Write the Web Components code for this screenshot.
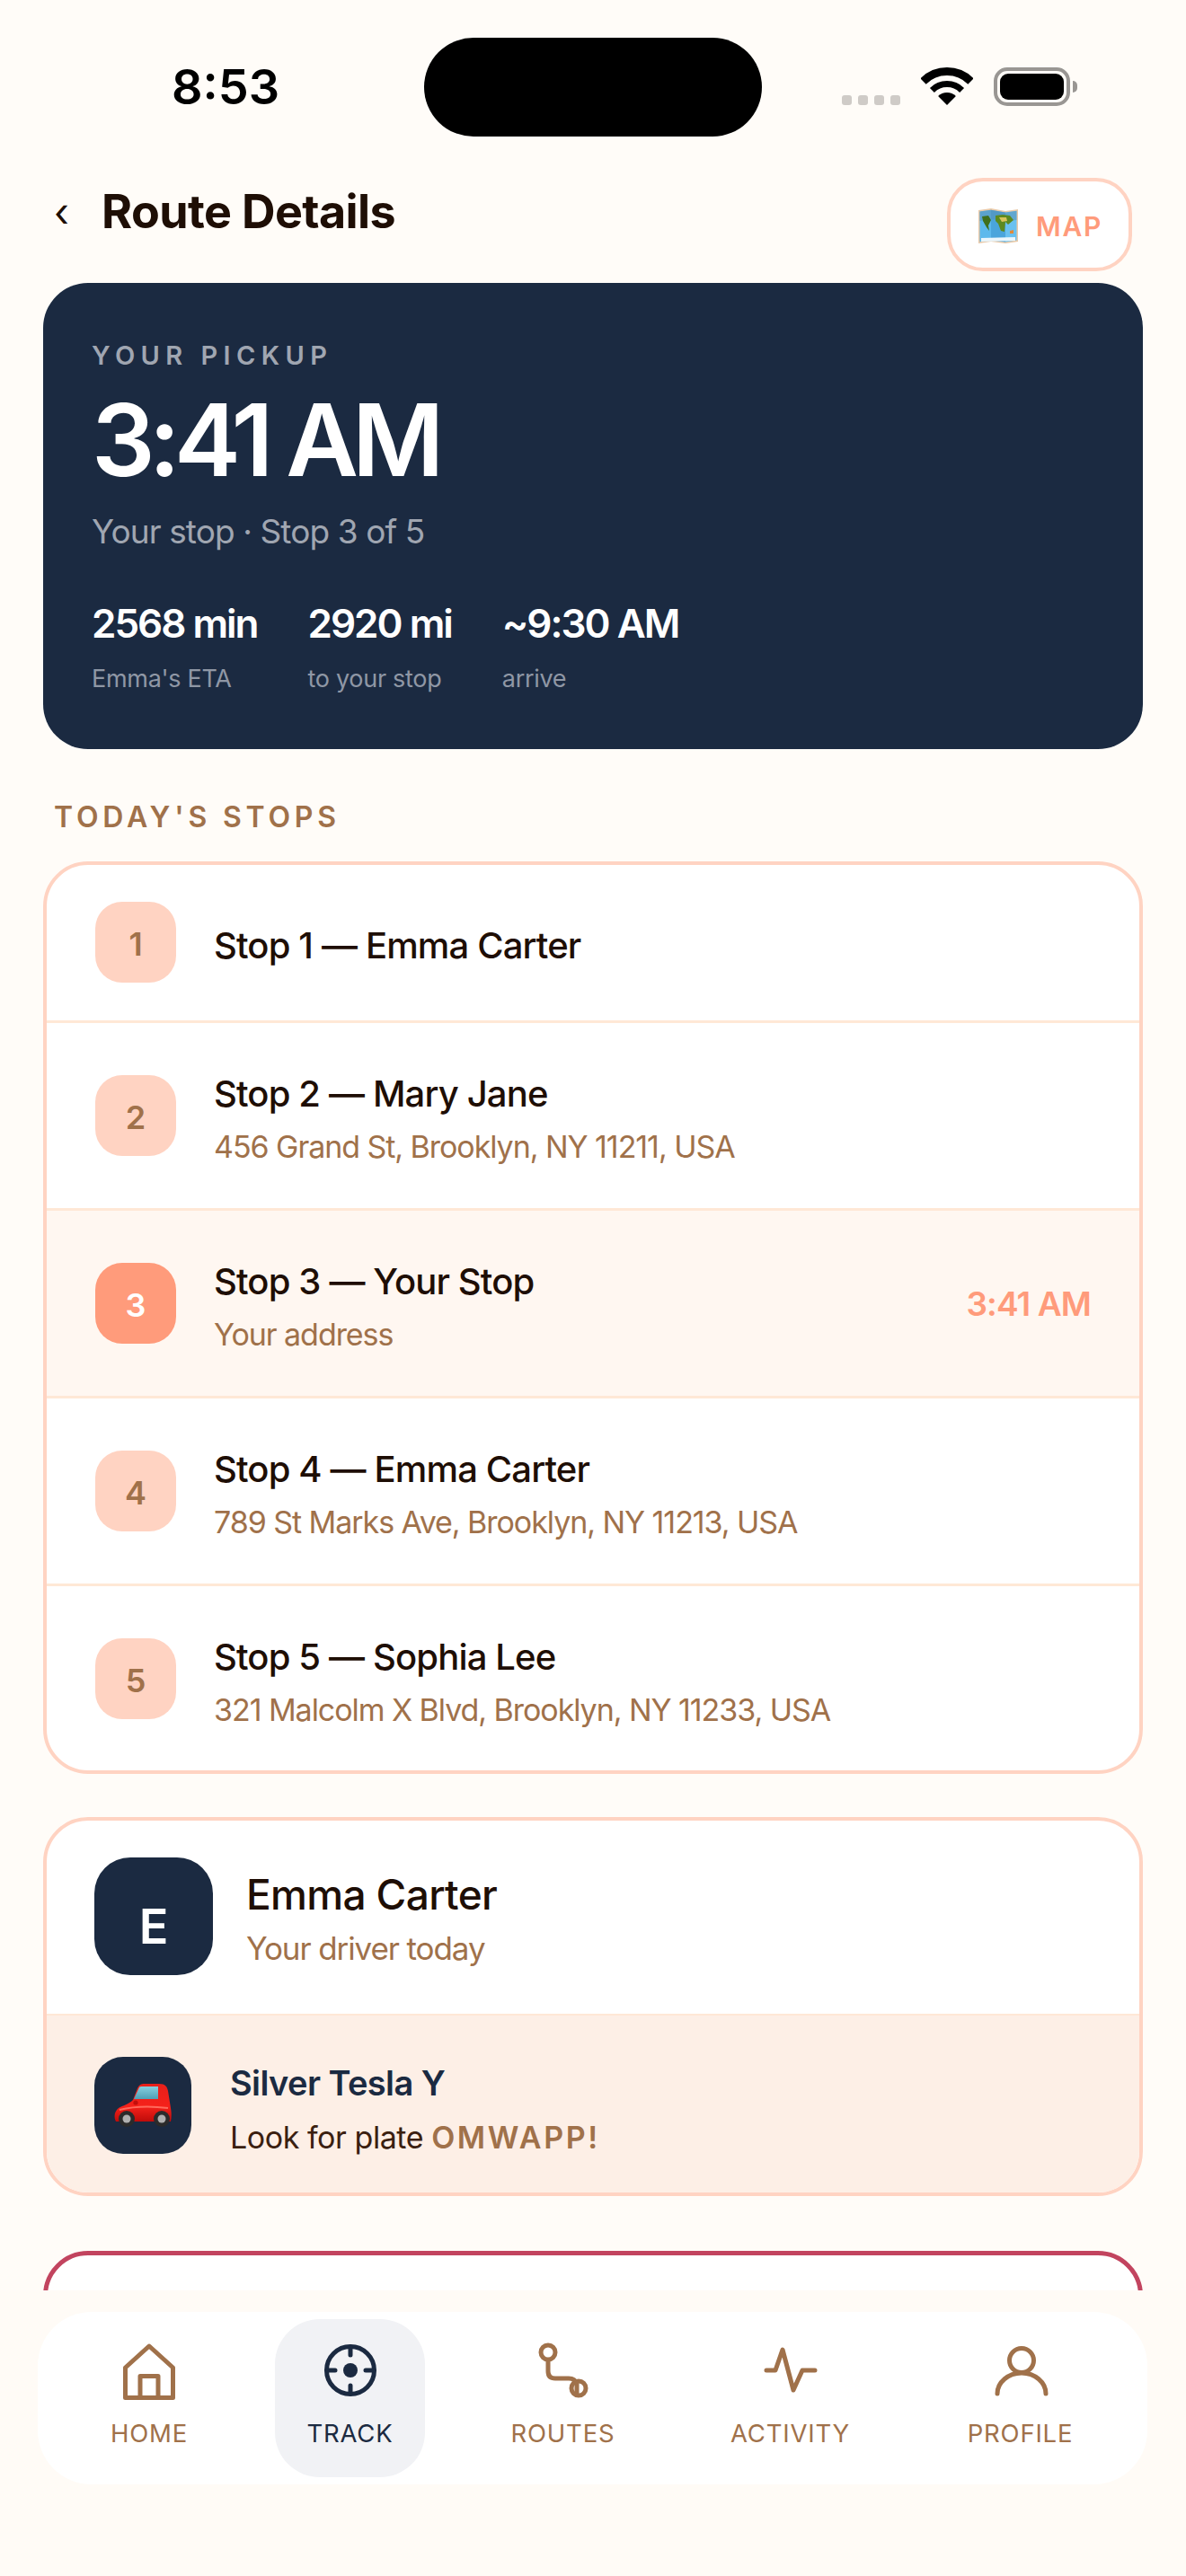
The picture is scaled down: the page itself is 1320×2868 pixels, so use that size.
<!DOCTYPE html>
<html lang="en">
<head>
<meta charset="utf-8">
<title>Route Details</title>
<style>
  html,body{margin:0;padding:0;background:#FFFCF8;}
  body{font-family:"Inter","Liberation Sans",sans-serif;color:#1E0E05;}
</style>
</head>
<body>
<app-screen>
  <status-bar slot="top" time="8:53"></status-bar>
  <route-header slot="top" title="Route Details"></route-header>
  <pickup-hero time="3:41 AM" stop="Your stop · Stop 3 of 5"></pickup-hero>
  <section-title>TODAY'S STOPS</section-title>
  <stop-list>
    <stop-row num="1" name="Stop 1 — Emma Carter"></stop-row>
    <stop-row num="2" name="Stop 2 — Mary Jane" addr="456 Grand St, Brooklyn, NY 11211, USA"></stop-row>
    <stop-row num="3" name="Stop 3 — Your Stop" addr="Your address" time="3:41 AM" current></stop-row>
    <stop-row num="4" name="Stop 4 — Emma Carter" addr="789 St Marks Ave, Brooklyn, NY 11213, USA"></stop-row>
    <stop-row num="5" name="Stop 5 — Sophia Lee" addr="321 Malcolm X Blvd, Brooklyn, NY 11233, USA"></stop-row>
  </stop-list>
  <driver-card name="Emma Carter" car="Silver Tesla Y" plate="OMWAPP!"></driver-card>
  <alert-card></alert-card>
  <bottom-nav slot="bottom">
    <nav-item icon="home" label="HOME"></nav-item>
    <nav-item icon="track" label="TRACK" active></nav-item>
    <nav-item icon="routes" label="ROUTES"></nav-item>
    <nav-item icon="activity" label="ACTIVITY"></nav-item>
    <nav-item icon="profile" label="PROFILE"></nav-item>
  </bottom-nav>
</app-screen>

<script>
const FONT = '"Inter","Liberation Sans",sans-serif'

class AppScreen extends HTMLElement{
    constructor(){
        super()
        this.attachShadow({mode:'open'})
    }
    connectedCallback(){
        this.shadowRoot.innerHTML = `
        <style>
            :host{display:flex;flex-direction:column;width:1320px;height:2868px;overflow:hidden;background:#FFFCF8;}
            .scroll{height:2235px;overflow:hidden;padding:0 48px;box-sizing:border-box;flex:none;}
            .bottom{flex:1;padding-top:24px;background:#FFFBF6;}
        </style>
        <slot name="top"></slot>
        <div class="scroll"><slot></slot></div>
        <div class="bottom"><slot name="bottom"></slot></div>
        `
    }
}

class StatusBar extends HTMLElement{
    constructor(){
        super()
        this.attachShadow({mode:'open'})
    }
    connectedCallback(){
        this.shadowRoot.innerHTML = `
        <style>
            :host{display:grid;grid-template-columns:472px 376px 472px;padding-top:42px;height:110px;font-family:${FONT};}
            .time{font-size:54px;font-weight:600;line-height:110px;color:#000;padding-left:191px;}
            .island{background:#000;border-radius:55px;height:110px;}
            .right{display:flex;align-items:flex-start;padding:33px 0 0 89px;}
            .dots{display:flex;gap:7px;margin-top:31px;}
            .dots i{display:block;width:11px;height:11px;border-radius:3px;background:#CFCBC7;}
            .wifi{margin-left:23px;display:block;}
            .batt{margin-left:23px;width:85px;height:43px;border:4px solid #999693;border-radius:15px;box-sizing:border-box;padding:3px;}
            .batt div{background:#000;height:100%;border-radius:9px;}
            .nub{width:5px;height:13px;background:#999693;border-radius:0 5px 5px 0;margin:15px 0 0 3px;}
        </style>
        <div class="time">${this.getAttribute('time')}</div>
        <div class="island"></div>
        <div class="right">
            <div class="dots"><i></i><i></i><i></i><i></i></div>
            <svg class="wifi" width="58" height="43" viewBox="0 0 58 43" fill="none" stroke="#000">
                <path d="M2.5 15.5A37.5 37.5 0 0 1 55.5 15.5" stroke-width="9"/>
                <path d="M12.4 25.4A23.5 23.5 0 0 1 45.6 25.4" stroke-width="7"/>
                <path d="M29 42L19.1 32.1A14 14 0 0 1 38.9 32.1Z" fill="#000" stroke="none"/>
            </svg>
            <div class="batt"><div></div></div>
            <div class="nub"></div>
        </div>
        `
    }
}

class RouteHeader extends HTMLElement{
    constructor(){
        super()
        this.attachShadow({mode:'open'})
    }
    connectedCallback(){
        this.shadowRoot.innerHTML = `
        <style>
            :host{display:flex;align-items:flex-start;padding:46px 60px 13px 60px;font-family:${FONT};}
            .back{font-size:44px;line-height:60px;width:53px;margin-top:8px;color:#1E0E05;}
            h1{margin:8px 0 0;font-size:52px;font-weight:700;line-height:60px;letter-spacing:-.6px;color:#1E0E05;flex:1;}
            .map{display:flex;align-items:center;box-sizing:border-box;width:206px;height:104px;background:#fff;border:4px solid #FFD3C2;border-radius:40px;padding:4px 0 0 30px;gap:19px;}
            .map span{font-size:30px;font-weight:600;letter-spacing:1.8px;color:#FF9B7B;}
        </style>
        <div class="back">‹</div>
        <h1>${this.getAttribute('title')}</h1>
        <div class="map">
            <svg width="46" height="40" viewBox="0 0 46 40">
                <path d="M1 2L15 0L31 3L45 1V37L31 39L15 37L1 39Z" fill="#E9C9A8"/>
                <path d="M2.5 3.5L15 1.8V35.5L2.5 37.2Z" fill="#5DB9EC"/>
                <path d="M15 1.8L31 4.6V37.5L15 35.5Z" fill="#4AA5DC"/>
                <path d="M31 4.6L43.5 2.8V35.4L31 37.5Z" fill="#69C1F0"/>
                <path d="M2.5 3.5L15 1.8L31 4.6L43.5 2.8V13L31 14L15 12L2.5 14Z" fill="#5A8FB5" opacity=".55"/>
                <path d="M5 9L12 8L15 13L12 19L13 25L10 21L6 14Z" fill="#3F6F1C"/>
                <path d="M20 8L28 7L36 8L40 13L34 18L31 15L30 26L26 25L23 17L20 14Z" fill="#5C8A20"/>
                <path d="M24 10L32 10L33 14L27 15Z" fill="#D9C45A"/>
                <path d="M36 25L40 24L40 28L36 28Z" fill="#E08A3A"/>
                <path d="M4 33L42 32V36L4 37Z" fill="#EAF6FC"/>
            </svg>
            <span>MAP</span>
        </div>
        `
    }
}

class PickupHero extends HTMLElement{
    constructor(){
        super()
        this.attachShadow({mode:'open'})
    }
    connectedCallback(){
        this.shadowRoot.innerHTML = `
        <style>
            :host{display:block;background:#1B2A41;border-radius:50px;padding:63px 54px 60px;font-family:${FONT};color:#fff;}
            .lbl{font-size:29px;font-weight:600;line-height:36px;letter-spacing:6.4px;color:#A0A6B1;}
            .big{font-size:111px;font-weight:600;line-height:120px;margin-top:16px;letter-spacing:-7px;}
            .sub{font-size:37px;line-height:50px;margin-top:17px;color:#A0A6B1;letter-spacing:-.9px;}
            .stats{display:flex;gap:56px;margin-top:52px;}
            .val{font-size:44px;font-weight:600;line-height:50px;letter-spacing:-2px;}
            .cap{font-size:27px;line-height:36px;margin-top:19px;color:#8F97A5;letter-spacing:-.3px;}
        </style>
        <div class="lbl">YOUR PICKUP</div>
        <div class="big">${this.getAttribute('time')}</div>
        <div class="sub">${this.getAttribute('stop')}</div>
        <div class="stats">
            <div><div class="val">2568 min</div><div class="cap">Emma's ETA</div></div>
            <div><div class="val">2920 mi</div><div class="cap">to your stop</div></div>
            <div><div class="val">~9:30 AM</div><div class="cap">arrive</div></div>
        </div>
        `
    }
}

class SectionTitle extends HTMLElement{
    constructor(){
        super()
        this.attachShadow({mode:'open'})
    }
    connectedCallback(){
        this.shadowRoot.innerHTML = `
        <style>
            :host{display:block;margin:56px 0 29px 12px;font-family:${FONT};font-size:32px;font-weight:600;line-height:40px;letter-spacing:4.8px;color:#A0714A;}
        </style>
        <slot></slot>
        `
    }
}

class StopList extends HTMLElement{
    constructor(){
        super()
        this.attachShadow({mode:'open'})
    }
    connectedCallback(){
        this.shadowRoot.innerHTML = `
        <style>
            :host{display:block;background:#fff;border:4px solid #FFD3C2;border-radius:50px;overflow:hidden;}
        </style>
        <slot></slot>
        `
    }
}

class StopRow extends HTMLElement{
    constructor(){
        super()
        this.attachShadow({mode:'open'})
    }
    connectedCallback(){
        this.render()
    }
    styles(){
        return `
        :host{display:flex;align-items:center;gap:42px;padding:41px 54px;font-family:${FONT};border-top:3px solid #FFE8D6;}
        :host(:first-child){border-top:0;padding-bottom:42px;}
        :host(:last-child){padding-bottom:40px;}
        :host([current]){background:#FFF7F1;}
        .num{flex:none;width:90px;height:90px;border-radius:30px;background:#FFD3C2;color:#A0714A;display:flex;align-items:center;justify-content:center;font-size:36px;font-weight:600;padding-top:4px;box-sizing:border-box;}
        :host([current]) .num{background:#FF9B7B;color:#fff;}
        .txt{flex:1;display:flex;flex-direction:column;gap:10px;padding:12px 0 4px;}
        .name{font-size:40px;font-weight:500;line-height:52px;letter-spacing:-.85px;color:#1E0E05;}
        .addr{font-size:34px;line-height:46px;letter-spacing:-1.05px;color:#A0714A;}
        .time{font-size:37px;font-weight:600;letter-spacing:-.9px;color:#FF9B7B;}
        `
    }
    template(){
        let addr = this.getAttribute('addr')
        let time = this.getAttribute('time')
        return `
        <div class="num">${this.getAttribute('num')}</div>
        <div class="txt">
            <div class="name">${this.getAttribute('name')}</div>
            ${addr ? `<div class="addr">${addr}</div>` : ''}
        </div>
        ${time ? `<div class="time">${time}</div>` : ''}
        `
    }
    render(){
        this.shadowRoot || this.attachShadow({mode:'open'})
        this.shadowRoot.innerHTML = `<style>${this.styles()}</style>${this.template()}`
    }
}

class DriverCard extends HTMLElement{
    constructor(){
        super()
        this.attachShadow({mode:'open'})
    }
    connectedCallback(){
        this.shadowRoot.innerHTML = `
        <style>
            :host{display:block;margin-top:48px;background:#fff;border:4px solid #FFD3C2;border-radius:50px;overflow:hidden;font-family:${FONT};}
            .top{display:flex;gap:37px;padding:41px 53px 43px;height:131px;}
            .avatar{flex:none;width:132px;height:131px;border-radius:40px;background:#1B2A41;color:#fff;font-size:54px;font-weight:600;display:flex;justify-content:center;padding-top:47px;box-sizing:border-box;line-height:60px;}
            .name{font-size:46px;font-weight:500;line-height:56px;letter-spacing:-.65px;margin-top:13px;color:#1E0E05;}
            .sub{font-size:35px;line-height:46px;margin-top:9px;letter-spacing:-1.1px;color:#A0714A;}
            .car{display:flex;gap:43px;align-items:center;background:#FDEFE6;border-top:2px solid #FFE8D6;padding:46px 53px 43px;}
            .icon{flex:none;width:108px;height:108px;border-radius:32px;background:#1B2A41;display:flex;align-items:center;justify-content:center;}
            .model{font-size:38px;font-weight:600;line-height:48px;letter-spacing:-.6px;margin-top:4px;color:#1B2A41;}
            .plate{font-size:34px;line-height:46px;margin-top:14px;margin-bottom:-6px;letter-spacing:-.45px;color:#3A2010;}
            .plate b{font-weight:600;letter-spacing:2.6px;color:#A0714A;}
        </style>
        <div class="top">
            <div class="avatar">E</div>
            <div>
                <div class="name">${this.getAttribute('name')}</div>
                <div class="sub">Your driver today</div>
            </div>
        </div>
        <div class="car">
            <div class="icon">
                <svg width="64" height="50" viewBox="0 0 64 50">
                    <defs>
                        <linearGradient id="glass" x1="0" y1="0" x2="0" y2="1"><stop offset="0" stop-color="#86CFDF"/><stop offset="1" stop-color="#4F9FB5"/></linearGradient>
                        <linearGradient id="paint" x1="0" y1="0" x2="0" y2="1"><stop offset="0" stop-color="#E8201A"/><stop offset=".6" stop-color="#F5211A"/><stop offset="1" stop-color="#BE0C0A"/></linearGradient>
                    </defs>
                    <path d="M2 43C-1 37 1 31 5 28C10 25 16 24 21 19L26 6C28 2 30 1 34 1H50C57 1 59 4 60 9L63 28C64 34 64 38 63 43Z" fill="url(#paint)"/>
                    <path d="M28 5C28 4 30 4 32 4H49V18H22Z" fill="url(#glass)"/>
                    <circle cx="24" cy="22" r="2.6" fill="#C30F0C"/>
                    <path d="M6 30C22 26 44 26 60 28" stroke="#FF6A5C" stroke-width="2" fill="none"/>
                    <circle cx="14" cy="40" r="9" fill="#2B2B2B"/><circle cx="14" cy="40" r="4.5" fill="#B0B0B0"/>
                    <circle cx="53" cy="40" r="9" fill="#2B2B2B"/><circle cx="53" cy="40" r="4.5" fill="#B0B0B0"/>
                </svg>
            </div>
            <div>
                <div class="model">${this.getAttribute('car')}</div>
                <div class="plate">Look for plate <b>${this.getAttribute('plate')}</b></div>
            </div>
        </div>
        `
    }
}

// only the top edge of this one is visible above the nav
class AlertCard extends HTMLElement{
    constructor(){
        super()
        this.attachShadow({mode:'open'})
    }
    connectedCallback(){
        this.shadowRoot.innerHTML = `
        <style>
            :host{display:block;margin-top:61px;height:300px;background:#fff;border:5px solid #C2445F;border-radius:50px;}
        </style>
        `
    }
}

class BottomNav extends HTMLElement{
    constructor(){
        super()
        this.attachShadow({mode:'open'})
    }
    connectedCallback(){
        this.shadowRoot.innerHTML = `
        <style>
            :host{display:grid;grid-template-columns:160px 167px 187px 199px 193px;column-gap:60px;margin:0 43px 0 42px;padding:8px 0 8px 44px;background:#fff;border-radius:60px;height:176px;}
        </style>
        <slot></slot>
        `
    }
}

const ICONS = {
    home:'<path d="M36 8L9.5 32V65.5H62.5V32Z"/><path d="M26 65.5V41.5H46V65.5"/>',
    track:'<circle cx="36" cy="35" r="26.5"/><circle cx="36" cy="35" r="8" fill="currentColor" stroke="none"/><path d="M36 9V18M36 52V61M10 35H19M53 35H62"/>',
    routes:'<circle cx="19" cy="15" r="8"/><circle cx="53" cy="55" r="8"/><path d="M19 25V36Q19 44 27 44H42Q49 44 51 50V60"/>',
    activity:'<path d="M9 35H19L27 12L39 57L49 35H63"/>',
    profile:'<circle cx="37" cy="24" r="13.5"/><path d="M10 61A27 23 0 0 1 64 61"/>'
}

class NavItem extends HTMLElement{
    static get observedAttributes(){
        return ["icon","label"]
    }
    constructor(){
        super()
        this.attachShadow({mode:'open'})
    }
    attributeChangedCallback(){
        this.render()
    }
    connectedCallback(){
        this.render()
    }
    render(){
        this.shadowRoot.innerHTML = `
        <style>
            :host{display:flex;flex-direction:column;align-items:center;box-sizing:border-box;height:176px;padding-top:22px;border-radius:50px;font-family:${FONT};color:#A0714A;}
            :host([active]){background:#F1F2F5;color:#1B2A41;}
            svg{display:block;fill:none;stroke:currentColor;stroke-width:5;stroke-linecap:round;stroke-linejoin:round;}
            span{font-size:27.5px;line-height:36px;margin-top:15px;letter-spacing:.8px;}
        </style>
        <svg width="72" height="72" viewBox="0 0 72 72">${ICONS[this.getAttribute('icon')] || ''}</svg>
        <span>${this.getAttribute('label') || ''}</span>
        `
    }
}

window.customElements.define('app-screen',AppScreen)
window.customElements.define('status-bar',StatusBar)
window.customElements.define('route-header',RouteHeader)
window.customElements.define('pickup-hero',PickupHero)
window.customElements.define('section-title',SectionTitle)
window.customElements.define('stop-list',StopList)
window.customElements.define('stop-row',StopRow)
window.customElements.define('driver-card',DriverCard)
window.customElements.define('alert-card',AlertCard)
window.customElements.define('bottom-nav',BottomNav)
window.customElements.define('nav-item',NavItem)
</script>
</body>
</html>
